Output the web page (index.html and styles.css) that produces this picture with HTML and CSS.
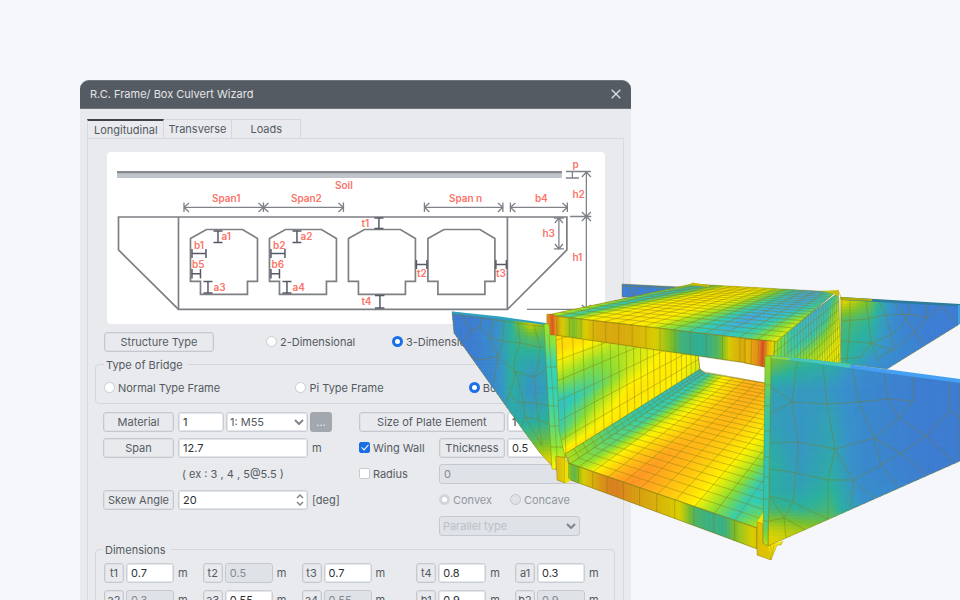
FILE: index.html
```html
<!DOCTYPE html>
<html lang="en">
<head>
<meta charset="utf-8">
<meta name="viewport" content="width=device-width, initial-scale=1">
<title>R.C. Frame/ Box Culvert Wizard</title>
<link rel="stylesheet" href="styles.css">
</head>
<body>
<main class="hero">
  <section class="dialog" aria-labelledby="dialog-title">
    <header class="titlebar">
      <h1 class="title" id="dialog-title">R.C. Frame/ Box Culvert Wizard</h1>
      <button class="close" type="button" aria-label="Close">
        <svg viewBox="0 0 10 10" width="10" height="10"><path d="M.7.7l8.6 8.6M9.3.7L.7 9.3"/></svg>
      </button>
    </header>
    <form class="body">
      <nav class="tabs">
        <button class="tab tab-active" type="button">Longitudinal</button>
        <button class="tab" type="button">Transverse</button>
        <button class="tab" type="button">Loads</button>
      </nav>
      <div class="panel">
        <svg class="diagram" viewBox="107 152 498 172" role="img" aria-label="Culvert section">
          <defs>
            <path id="cell" d="M0 9L16 0H52L67 9V52H57V65H10V52H0Z"/>
          </defs>
          <path d="M117 172H562V178H117Z" fill="#c0c4cb"/>
          <path d="M117 171H562V173.200H117Z" fill="#85888c"/>
          <g class="outline">
            <path d="M118.500 217H567V250L507.500 309.500H178.500L118.500 250Z"/>
            <path d="M178.500 217V309.500M507.500 217V309.500"/>
            <use href="#cell" x="190.500" y="229.500"/>
            <use href="#cell" x="269.500" y="229.500"/>
            <use href="#cell" x="348.500" y="229.500"/>
            <use href="#cell" x="428" y="229.500"/>
          </g>
          <g class="measure">
            <path d="M184 202.500V212M184 207.300H343.500M343.500 202.500V212M263.500 202.500V212M189 203L184 207.300L189 212M258.500 203L268.500 212M268.500 203L258.500 212M338.500 203L343.500 207.300L338.500 212"/>
            <path d="M424.500 202.500V212M424.500 207.300H503M503 202.500V212M429.500 203L424.500 207.300L429.500 212M498 203L503 207.300L498 212"/>
            <path d="M510.500 202.500V212M510.500 207.300H567.500M567.500 202.500V212M515.500 203L510.500 207.300L515.500 212M562.500 203L567.500 207.300L562.500 212"/>
            <path d="M566 171.500H591M566 178H579M572.500 171.500V178M586.500 172V309M582 177L586.500 172L591 177M570 216.500H591.500M582 212L591 221M591 212L582 221M527 309.500H592M582 305L586.500 309L591 305"/>
            <path d="M554 218H564M559 218V249M554 249H564M555 223L559 218L563 223M555 244L559 249L563 244"/>
          </g>
          <g class="measure-dark">
            <path d="M213.500 231H222.500M218 231V242.500M213.500 242.500H222.500M292.500 231H301.500M297 231V242.500M292.500 242.500H301.500"/>
            <path d="M192 249V258M192 253.500H206M206 249V258M271 249V258M271 253.500H285M285 249V258"/>
            <path d="M192 269V278.500M192 273.700H200.500M200.500 269V278.500M271 269V278.500M271 273.700H279.500M279.500 269V278.500"/>
            <path d="M203.500 281.500H212.500M208 281.500V293M203.500 293H212.500M282.500 281.500H291.500M287 281.500V293M282.500 293H291.500"/>
            <path d="M374.500 218H383.500M379 218V228.500M374.500 228.500H383.500M375 295.500H384.500M380 295.500V308M375 308H384.500"/>
            <path d="M416.500 260V269M416.500 264.500H427M427 260V269M496 260V269M496 264.500H506.500M506.500 260V269"/>
          </g>
          <g class="marks">
            <text x="335" y="189">Soil</text>
            <text x="212" y="202">Span1</text>
            <text x="291" y="202">Span2</text>
            <text x="449" y="202">Span n</text>
            <text x="535" y="202">b4</text>
            <text x="572.500" y="168">p</text>
            <text x="572.500" y="198">h2</text>
            <text x="572.500" y="261">h1</text>
            <text x="542.500" y="237">h3</text>
            <text x="221.500" y="240">a1</text>
            <text x="300.500" y="240">a2</text>
            <text x="194" y="249">b1</text>
            <text x="273" y="249">b2</text>
            <text x="192" y="268">b5</text>
            <text x="271.500" y="268">b6</text>
            <text x="213.500" y="291">a3</text>
            <text x="292.500" y="291">a4</text>
            <text x="361.500" y="227">t1</text>
            <text x="361.500" y="305">t4</text>
            <text x="417" y="277">t2</text>
            <text x="496" y="277">t3</text>
          </g>
        </svg>

        <div class="structure">
          <button class="key key-type" type="button">Structure Type</button>
          <label class="choice"><input class="radio" type="radio" name="dim">2-Dimensional</label>
          <label class="choice"><input class="radio" type="radio" name="dim" checked>3-Dimensional</label>
        </div>

        <fieldset class="group">
          <legend>Type of Bridge</legend>
          <div class="bridge">
            <label class="choice"><input class="radio" type="radio" name="bridge">Normal Type Frame</label>
            <label class="choice"><input class="radio" type="radio" name="bridge">Pi Type Frame</label>
            <label class="choice"><input class="radio" type="radio" name="bridge" checked>Box Type</label>
          </div>
        </fieldset>

        <div class="settings">
          <div class="column">
            <div class="row">
              <label class="key key-mid" for="material">Material</label>
              <div class="slot slot-pair">
                <input class="field" id="material" type="text" value="1">
                <span class="pick">
                  <select class="field" aria-label="Material name"><option>1: M55</option></select>
                  <svg class="chevron" viewBox="0 0 10 6" width="10" height="6"><path d="M1 1l4 4 4-4"/></svg>
                </span>
              </div>
              <button class="more" type="button">...</button>
            </div>
            <div class="row">
              <label class="key key-mid" for="span">Span</label>
              <div class="slot"><input class="field" id="span" type="text" value="12.7"></div>
              <span class="unit">m</span>
            </div>
            <div class="row"><span class="hint">( ex : 3 , 4 , 5@5.5 )</span></div>
            <div class="row">
              <label class="key key-mid" for="skew">Skew Angle</label>
              <div class="slot spin">
                <input class="field" id="skew" type="text" value="20">
                <svg class="steps" viewBox="0 0 8 14" width="8" height="14"><path d="M1 5l3-3 3 3M1 9l3 3 3-3"/></svg>
              </div>
              <span class="unit">[deg]</span>
            </div>
          </div>
          <div class="column">
            <div class="row">
              <label class="key key-wide" for="plate">Size of Plate Element</label>
              <input class="field field-end" id="plate" type="text" value="1">
            </div>
            <div class="row">
              <label class="choice lead"><input class="check" type="checkbox" checked>Wing Wall</label>
              <label class="key key-small" for="thickness">Thickness</label>
              <input class="field field-end" id="thickness" type="text" value="0.5">
            </div>
            <div class="row">
              <label class="choice lead"><input class="check" type="checkbox">Radius</label>
              <input class="field field-long" type="text" value="0" aria-label="Radius value" disabled>
            </div>
            <div class="row row-faint">
              <span class="lead"></span>
              <label class="choice choice-first"><input class="radio" type="radio" name="curve" checked disabled>Convex</label>
              <label class="choice"><input class="radio" type="radio" name="curve" disabled>Concave</label>
            </div>
            <div class="row">
              <span class="lead"></span>
              <span class="pick pick-long">
                <select class="field" aria-label="Parallel type" disabled><option>Parallel type</option></select>
                <svg class="chevron" viewBox="0 0 10 6" width="10" height="6"><path d="M1 1l4 4 4-4"/></svg>
              </span>
            </div>
          </div>
        </div>

        <fieldset class="group group-last">
          <legend>Dimensions</legend>
          <div class="dims">
            <div class="dim"><label class="key" for="t1">t1</label><input class="field" id="t1" value="0.7">m</div>
            <div class="dim"><label class="key" for="t2">t2</label><input class="field" id="t2" value="0.5" disabled>m</div>
            <div class="dim"><label class="key" for="t3">t3</label><input class="field" id="t3" value="0.7">m</div>
            <div class="dim"><label class="key" for="t4">t4</label><input class="field" id="t4" value="0.8">m</div>
            <div class="dim"><label class="key" for="a1">a1</label><input class="field" id="a1" value="0.3">m</div>
            <div class="dim"><label class="key" for="a2">a2</label><input class="field" id="a2" value="0.3" disabled>m</div>
            <div class="dim"><label class="key" for="a3">a3</label><input class="field" id="a3" value="0.55">m</div>
            <div class="dim"><label class="key" for="a4">a4</label><input class="field" id="a4" value="0.55" disabled>m</div>
            <div class="dim"><label class="key" for="b1">b1</label><input class="field" id="b1" value="0.9">m</div>
            <div class="dim"><label class="key" for="b2">b2</label><input class="field" id="b2" value="0.9" disabled>m</div>
          </div>
        </fieldset>
      </div>
    </form>
  </section>
  <svg class="model" id="model" viewBox="450 280 510 285" role="img" aria-label="Culvert stress contours"></svg>
</main>
<script src="model.js"></script>
</body>
</html>
```
FILE: styles.css
```css
* { box-sizing: border-box; }

body {
  margin: 0;
  background: #f5f7fb;
  color: #555a61;
  font: 11px/14px Inter, "Liberation Sans", sans-serif;
}

.hero {
  position: relative;
  height: 100vh;
  overflow: hidden;
  padding: 80px 0 0 8.333%;
}

.dialog {
  width: 62.6%;
  border-radius: 9px 9px 0 0;
  background: #e8eaee;
}

.titlebar {
  display: flex;
  align-items: center;
  justify-content: space-between;
  height: 29px;
  padding: 0 10px 1px;
  border-top: 1px solid #70757c;
  border-bottom: 1px solid #70757c;
  border-radius: 9px 9px 0 0;
  background: #555b63;
}

.title {
  margin: 0;
  color: #e4e6e9;
  font-size: 11px;
  font-weight: 400;
}

button, input, select { margin: 0; font: inherit; color: inherit; }

.close { display: flex; padding: 0; border: 0; background: none; }
.close path { fill: none; stroke: #dfe1e4; stroke-width: 1.3; }

.body { padding: 10px 7px 0; }

.tabs { display: flex; }

.tab {
  height: 19px;
  padding: 0 18px;
  border: 1px solid #d5d8dd;
  border-width: 1px 1px 0 0;
  background: none;
  line-height: 17px;
}

.tab:nth-child(2) { padding: 0 5px; }

.tab-active {
  padding: 1px 5px 0 6px;
  border-top: 2px solid #3d4248;
  border-left-width: 1px;
}

.panel {
  padding: 13px 8px 0 7px;
  border: 1px solid #d7dade;
  border-bottom: 0;
}

.diagram {
  display: block;
  width: calc(100% - 22px);
  margin: 0 10px 8px 12px;
  border-radius: 4px;
  background: #fff;
}

.outline { fill: none; stroke: #7d7f82; stroke-width: 1.700; }
.measure { fill: none; stroke: #7f8389; stroke-width: 1.300; }
.measure-dark { fill: none; stroke: #565a66; stroke-width: 1.500; }
.marks { fill: #fb7469; font-size: 10px; font-weight: 600; }

.key {
  display: flex;
  align-items: center;
  justify-content: center;
  flex: none;
  height: 20px;
  padding: 0;
  border: 1px solid #c5c9cf;
  border-radius: 3px;
  background: #e8eaee;
  box-shadow: inset 0 0 0 1px #dde0e4;
}

.structure {
  display: grid;
  grid-template-columns: 162fr 126fr 223fr;
  padding-left: 9px;
}

.choice { display: flex; align-items: center; gap: 3px; white-space: nowrap; }

.radio, .check {
  appearance: none;
  flex: none;
  width: 11px;
  height: 11px;
  border: 1px solid #c8ccd2;
  border-radius: 50%;
  background: #fff;
}

.radio:checked { border: 3px solid #1a6fe6; }
.radio:disabled { border: 1px solid #c3c7cd; background: #dfe2e6; }
.radio:checked:disabled { border: 3px solid #d2d5da; background: #fff; }

.check { border-radius: 2px; }
.check:checked { position: relative; border-color: #1a6fe6; background: #1a6fe6; }
.check:checked::after {
  content: "";
  position: absolute;
  left: 3px;
  top: 0;
  width: 3px;
  height: 6px;
  border: solid #fff;
  border-width: 0 1px 1px 0;
  transform: rotate(42deg);
}

.group {
  min-width: 0;
  margin: 6px 0 0;
  padding: 8px 0 7px 8px;
  border: 1px solid #d3d6db;
  border-radius: 4px;
}

.group-last { margin-top: 7px; }

.group legend { margin-left: 0; padding: 0 5px 0 2px; }
.group-last legend { margin-left: -1px; }

.bridge {
  display: grid;
  grid-template-columns: 190fr 172fr 144fr;
  height: 16px;
}

.settings {
  display: grid;
  grid-template-columns: 256fr 256fr;
  padding: 8px 0 0 8px;
}

.column { display: grid; gap: 6px; align-content: start; }
.row { display: flex; align-items: center; gap: 2px; height: 20px; }

.key-type { width: 110px; }
.key-mid { width: 71px; margin-right: 2px; }
.key-wide { width: 146px; }
.key-small { width: 66px; }

.slot { display: flex; gap: 2px; width: 130px; }
.slot-pair > .field { width: 46px; }

.field {
  appearance: none;
  width: 100%;
  min-width: 0;
  height: 20px;
  padding: 0 4px;
  border: 1px solid #cbcfd5;
  border-radius: 3px;
  outline: 0;
  background: #fff;
  box-shadow: inset 0 0 0 1px #e3e6ea;
  color: #2d3035;
  line-height: 14px;
}

.field:disabled {
  border-color: #c5c9cf;
  background: #dfe2e6;
  box-shadow: none;
  color: #868b92;
  opacity: 1;
}

.field-end { width: 73px; }
.field-long, .pick-long { width: 141px; }

.pick { position: relative; flex: 1; }
.pick-long { flex: none; }
.pick .field { display: block; color: #555a61; }
.pick .field:disabled { color: #bcc0c6; }
.pick-long .field, .slot-pair .pick .field { padding-left: 3px; }

.chevron, .steps { position: absolute; right: 4px; top: 7px; fill: none; stroke: #80858c; stroke-width: 2; }
.steps { top: 3px; stroke-width: 1.500; }
.spin { position: relative; }

.more {
  width: 22px;
  height: 20px;
  padding: 0;
  border: 0;
  border-radius: 3px;
  background: #a2a7b0;
  color: #e8eaee;
}

.unit { margin-left: 2px; }
.hint { margin-left: 79px; white-space: pre; }
.lead { width: 78px; }
.row-faint { color: #92979e; }
.choice-first { width: 69px; }

.dims {
  display: grid;
  grid-template-columns: 99fr 99fr 115fr 99fr 99fr;
  row-gap: 7px;
  margin-top: -2px;
}

.dim { display: flex; align-items: center; gap: 2px; }
.dim .key { width: 20px; }
.dim .field { width: 48px; margin-right: 2px; }

.model {
  position: absolute;
  top: 280px;
  left: 46.875%;
  width: 53.125%;
}

.model .mesh { fill: none; stroke: #857a10; stroke-opacity: .6; stroke-width: .700; }
```
FILE: model.js
```js
// Contour colours from low (blue) to high (red) stress.
const RAMP = [
  [0, 70, 143, 240], [.2, 64, 168, 232], [.35, 50, 203, 180], [.5, 140, 222, 50],
  [.65, 255, 242, 0], [.8, 255, 190, 18], [.9, 255, 150, 36], [1, 235, 80, 40]
];
const svg = document.getElementById("model");
let clips = 0;

function make(tag, attrs, parent) {
  const node = document.createElementNS("http://www.w3.org/2000/svg", tag);
  for (const name in attrs) node.setAttribute(name, attrs[name]);
  (parent || svg).appendChild(node);
  return node;
}

function color(t, shade) {
  let i = 1;
  while (i < RAMP.length - 1 && t > RAMP[i][0]) i++;
  const a = RAMP[i - 1], b = RAMP[i];
  const k = Math.max(0, Math.min(1, (t - a[0]) / (b[0] - a[0])));
  return "rgb(" + [1, 2, 3].map(n => Math.round((a[n] + (b[n] - a[n]) * k) * shade)) + ")";
}

function sample(grid, u, v) {
  const y = v * (grid.length - 1), j = Math.min(grid.length - 2, Math.floor(y));
  const at = row => {
    if (row.length === 1) return row[0];
    const x = u * (row.length - 1), i = Math.min(row.length - 2, Math.floor(x));
    return row[i] + (row[i + 1] - row[i]) * (x - i);
  };
  if (grid.length === 1) return at(grid[0]);
  return at(grid[j]) + (at(grid[j + 1]) - at(grid[j])) * (y - j);
}

// Perspective map of the unit square onto four corners.
function project([a, b, c, d]) {
  const sx = a[0] - b[0] + c[0] - d[0], sy = a[1] - b[1] + c[1] - d[1];
  const x1 = b[0] - c[0], x2 = d[0] - c[0], y1 = b[1] - c[1], y2 = d[1] - c[1];
  const det = x1 * y2 - x2 * y1;
  const g = (sx * y2 - x2 * sy) / det, h = (x1 * sy - sx * y1) / det;
  return (u, v) => {
    const w = g * u + h * v + 1;
    return [
      (((b[0] - a[0] + g * b[0]) * u + (d[0] - a[0] + h * d[0]) * v + a[0]) / w).toFixed(2),
      (((b[1] - a[1] + g * b[1]) * u + (d[1] - a[1] + h * d[1]) * v + a[1]) / w).toFixed(2)
    ];
  };
}

function surface({ quad, grid, shade = 1, fine = [40, 24], mesh, clip, lines }) {
  const map = project(quad), outline = clip || quad;
  const id = "face" + clips++;
  make("polygon", { points: outline.join(" ") }, make("clipPath", { id }));
  const g = make("g", { "clip-path": "url(#" + id + ")" });
  const [nu, nv] = fine;
  for (let j = 0; j < nv; j++) {
    for (let i = 0; i < nu; i++) {
      const fill = color(sample(grid, (i + .5) / nu, (j + .5) / nv), shade);
      const pts = [map(i / nu, j / nv), map((i + 1) / nu, j / nv), map((i + 1) / nu, (j + 1) / nv), map(i / nu, (j + 1) / nv)];
      make("polygon", { points: pts.join(" "), fill, stroke: fill, "stroke-width": .8 }, g);
    }
  }
  let d = lines || "";
  if (mesh) {
    for (let i = 0; i <= mesh[0]; i++) d += "M" + map(i / mesh[0], 0) + "L" + map(i / mesh[0], 1);
    for (let j = 0; j <= mesh[1]; j++) d += "M" + map(0, j / mesh[1]) + "L" + map(1, j / mesh[1]);
  }
  make("path", { d, class: "mesh" }, g);
  make("polygon", { points: outline.join(" "), class: "mesh" });
}

// Far wings
surface({
  quad: [[622, 284], [700, 288], [700, 300], [622, 297]], grid: [[0, 0, .1, .3]], shade: .88, fine: [30, 1],
  lines: "M629 285l4 10M640 285l-7 10M647 285v9M658 286v5M622 286l78 3"
});
surface({
  quad: [[841, 298], [960, 298], [960, 370], [841, 370]],
  grid: [[.72, .5, .08, 0, 0], [.42, .36, .08, 0, 0], [.38, .3, .1, 0, 0], [.4, .16, .08, 0, 0]],
  shade: .88, clip: [[840, 298], [960, 305], [958, 325], [887, 369], [840, 363]],
  lines: "M850 299l0 20-3 43M866 301l3 22 2 20 8 19M879 302l7 13 5 20 3 15M895 303l8 11 12 18 9 12M909 304l0 10-7 11-11 10-20 8-10 14-21 2M927 305l0 12-12 15-21 18M942 306l15 17M942 306l-15 12-18-4-23 1-20 4-24 2M841 341l30 2 23 8M879 358l12-8"
});
make("polygon", { points: "841,297 960,304 960,306.5 841,300", fill: "#2d7c9c" });
make("polygon", { points: "840,297 872,299 872,301 841,300", fill: "#b3ab08" });
make("polygon", { points: "958,305 960,305 960,324 958,325", fill: "#3ba3df" });

// Opening
make("polygon", { points: "697,353 767,366 767,385 697,372", fill: "#fff" });

// Floor
surface({
  quad: [[565, 462], [757, 528], [838, 396], [700, 372]],
  grid: [
    [.5, .52, .67, .85, .91, .85, .77, .68, .52, .36, .58],
    [.42, .42, .64, .77, .87, .83, .77, .68, .56, .36, .16],
    [.36, .37, .6, .7, .79, .81, .77, .69, .6, .42, .25],
    [.34, .36, .58, .7, .78, .82, .79, .7, .62, .5, .4],
    [.34, .35, .58, .7, .8, .84, .8, .7, .62, .5, .4],
    [.2, .4, .66, .76, .84, .84, .8, .7, .6, .5, .4]
  ],
  fine: [66, 40], mesh: [11, 24],
  clip: [[565, 462], [757, 528], [766, 515], [766, 383], [700, 372]]
});

// Inner side wall
surface({
  quad: [[550, 321], [699, 283], [700, 371], [555, 464]],
  grid: [
    [.66, .64, .58, .58, .6, .6],
    [.74, .7, .56, .57, .6, .62],
    [.55, .5, .56, .62, .66, .64],
    [.28, .4, .58, .65, .67, .64],
    [.36, .58, .69, .67, .66, .62],
    [.76, .7, .67, .66, .64, .58]
  ],
  fine: [50, 40], mesh: [21, 7],
  clip: [[552, 333], [698, 352], [700, 372], [565, 460], [554, 450]]
});
// Haunch between the wall and the floor
surface({
  quad: [[565, 454], [700, 369], [705, 373], [570, 464]], grid: [[.55, .4, .35, .33, .3, .3]],
  shade: .97, fine: [40, 1], mesh: [26, 2]
});
make("path", { d: "M698 353L700 371L765 383", class: "mesh" });

// Outer side wall
surface({
  quad: [[774, 341], [838, 293], [841, 362], [774, 440]],
  grid: [[.58, .3, .25, .25, .4], [.5, .34, .3, .35, .55], [.6, .52, .5, .52, .6], [.62, .62, .58, .62, .64], [.62, .62, .6, .6, .6]],
  fine: [34, 24], mesh: [24, 8],
  clip: [[772, 341], [834, 292], [839, 292], [842, 300], [840, 363], [771, 357]]
});

// Top slab
surface({
  quad: [[547, 315], [776, 342], [836, 292], [692, 284]],
  grid: [
    [.62, .36, .62, .68, .69, .66, .5, .36, .3, .4, .62],
    [.58, .32, .6, .68, .68, .66, .54, .37, .18, .32, .58],
    [.5, .28, .54, .67, .68, .66, .58, .4, .26, .22, .42],
    [.5, .25, .5, .66, .68, .66, .6, .42, .26, .2, .34],
    [.6, .24, .48, .64, .67, .66, .6, .42, .24, .2, .5]
  ],
  fine: [60, 26], mesh: [16, 18]
});
make("polygon", { points: "690,285 692,282.5 701,284 709,285 709,287", fill: "#c8b900" });
make("polygon", { points: "822,291 839,290 839,297 834,294", fill: "#c9bd10" });

// Slab front
surface({
  quad: [[547, 315], [776, 342], [776, 367], [547, 334]],
  grid: [[.88, .85, .62, .5, .62, .74, .77, .78, .77, .74, .7, .64, .54, .4, .36, .36, .44, .7, .8, .98, .75]],
  shade: .85, fine: [120, 1], mesh: [16, 1],
  clip: [[547, 315], [775, 342], [773, 356], [765, 367], [745, 363], [547, 334]]
});
surface({
  quad: [[547, 314], [556, 315], [557, 336], [547, 335]], grid: [[.82, .92, .98, .85]], shade: .9, fine: [12, 1]
});
surface({
  quad: [[745, 339], [775, 341], [773, 369], [745, 363]], grid: [[.72, .78, .84, .88, 1, .78, .6]], shade: .9,
  fine: [30, 1], mesh: [4, 1], clip: [[745, 339], [775, 341], [774, 356], [765, 356], [765, 367], [745, 363]]
});

// Floor front
surface({
  quad: [[565, 462], [757, 528], [757, 549], [565, 478]],
  grid: [[.6, .45, .67, .78, .88, .9, .84, .8, .76, .7, .64, .42, .38, .38, .56, .68]],
  shade: .85, fine: [100, 1], mesh: [11, 1]
});

// Near-left wing
surface({
  quad: [[452, 312], [550, 312], [554, 470], [452, 470]],
  grid: [
    [0, 0, .08, .34, .78, .5], [0, 0, .14, .35, .45, .42], [0, 0, .1, .34, .28, .3],
    [0, 0, .1, .34, .2, .28], [0, 0, .1, .3, .3, .34], [0, 0, .1, .4, .45, .5], [0, 0, .3, .6, .7, .76]
  ],
  shade: .87, fine: [44, 44],
  clip: [[452, 312], [546, 324], [556, 470], [540, 453], [523, 430], [454, 333]],
  lines: "M452 314L546 327M461 314l10 17 9-4 1-10M471 331l-10 12M480 327l10 11 13 3 1-21M494 319l-4 19 8 19-21 3-8-6M518 323l2 20 20 4 9 0M503 341l17 2M503 341l-5 16 18 15 18 5 12-7 3 0M534 325l6 22M514 373l1-15 5-15M540 347l-2 18-4 11 2 22 2 19 4 28M498 357l-4 26M516 372l-6 21 6 9 21 1 13 3M516 372l7 29 2 16 17 4 10 5M510 393l-5 10M525 417l-4 10M525 417l17 29"
});
make("polygon", { points: "452,311.5 500,316.5 546,323 546,325 500,319 452,313.5", fill: "#2fa3bd" });
surface({
  quad: [[544, 324], [557, 325], [566, 470], [552, 470]],
  grid: [[.5, .56], [.45, .5], [.36, .36], [.34, .35], [.37, .36], [.42, .4], [.5, .5], [.66, .64]],
  shade: 1.04, fine: [4, 60],
  clip: [[544, 324], [549, 324], [550, 335], [556, 335], [559, 430], [565, 457], [556, 457], [556, 469], [552, 469]],
  lines: "M549 335L557 456M544 367l13 0M546 388l12 0M549 406l10 0M550 426l10 0M551 447l12 0"
});
surface({ quad: [[556, 456], [565, 458], [565, 483], [557, 480]], grid: [[.74, .72, .66]], shade: .88, fine: [8, 1] });
make("polygon", { points: "565,458 568,463 568,478 571,480 565,484", fill: "#efdc08" });

// Foot below the near wall
make("polygon", { points: "757,522 763,513 768,545 783,541 781,545 777,545 771,560 757,555", fill: "#f4e302" });
surface({ quad: [[757, 522], [763, 524], [771, 560], [757, 555]], grid: [[.72, .7]], shade: .87, fine: [6, 1], clip: [[757, 522], [763, 524], [763, 543], [771, 546], [771, 560], [757, 555]] });
make("path", { d: "M771 560L777 545L781 545L783 541M774 545L772 555", class: "mesh" });

// Near-right wing
surface({
  quad: [[768, 350], [960, 350], [960, 550], [768, 550]],
  grid: [
    [.58, .45, .38, .2, .08, .03, 0], [.44, .34, .3, .14, .06, 0, 0], [.28, .24, .22, .1, .04, 0, 0],
    [.27, .22, .26, .12, .05, 0, 0], [.28, .22, .28, .12, .05, 0, 0], [.34, .22, .3, .12, .05, 0, 0],
    [.36, .24, .32, .12, .06, 0, 0], [.33, .28, .36, .16, .1, 0, 0], [.4, .36, .4, .2, .1, 0, 0],
    [.62, .56, .5, .4, .2, 0, 0], [.7, .66, .6, .5, .2, 0, 0]
  ],
  shade: .87, fine: [60, 60],
  clip: [[771, 356], [960, 381], [960, 461], [827, 520], [768, 546]],
  lines: "M797 362L792 402L798 442L796 473L793 502L784 518L786 538M823 365L827 404L835 449L828 480V519M852 368L859 402L874 438L881 465L898 487M883 371L888 399L899 418L926 436L954 462M914 375L913 401L899 418L874 438L835 449L798 442L770 443M949 380L950 411L926 436L901 453L881 465L853 480L828 480L796 473L770 469M950 411L960 418M913 401L888 399L859 402L827 404L792 402L770 386M792 402L770 414M874 438L901 453L926 475M835 449L853 480L873 498M853 480L851 508M770 496L793 502L827 519M770 496L784 518L806 530M784 518L769 521"
});
make("polygon", { points: "771,356 815,360 870,367 960,379 960,383 870,371 815,363 771,358", fill: "#46a0f2" });
make("polygon", { points: "771,355.5 815,360 850,364 850,368 815,363 771,358", fill: "#45c9b5" });
make("polygon", { points: "766,355.5 790,358 790,360 768,358", fill: "#91d63e" });
surface({
  quad: [[765, 356], [771, 356], [768, 546], [763, 543]],
  grid: [[.53], [.47], [.38], [.35], [.34], [.33], [.34], [.36], [.42], [.56]],
  shade: .97, fine: [1, 60],
  lines: "M764 385h8M764 406h8M764 431h8M764 457h8M763 477h8M763 499h8M763 521h8"
});
```
